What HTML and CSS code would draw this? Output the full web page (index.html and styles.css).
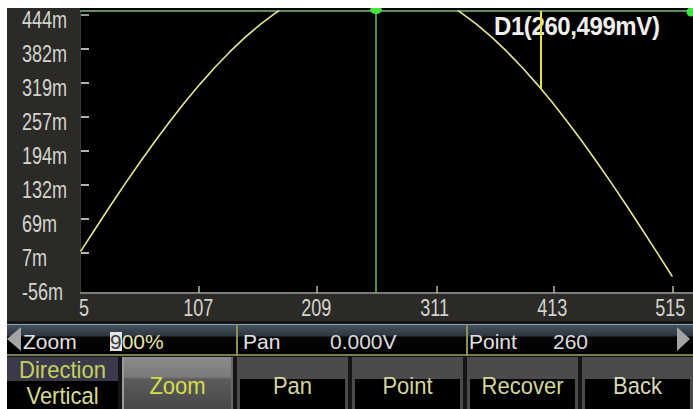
FILE: index.html
```html
<!DOCTYPE html>
<html lang="en">
<head>
<meta charset="utf-8">
<title>Waveform zoom</title>
<link rel="stylesheet" href="styles.css">
</head>
<body>
<div class="scope">
  <section class="chart">
    <ul class="y-scale">
      <li>444m</li>
      <li>382m</li>
      <li>319m</li>
      <li>257m</li>
      <li>194m</li>
      <li>132m</li>
      <li>69m</li>
      <li>7m</li>
      <li>-56m</li>
    </ul>
    <div class="plot">
      <svg class="trace" width="613" height="286" viewBox="0 0 613 286">
        <rect width="613" height="286" fill="#000"/>
        <line x1="0.5" y1="3" x2="0.5" y2="285" stroke="#3a3a36" stroke-width="1"/>
        <!-- top frame -->
        <line x1="0" y1="3" x2="613" y2="3" stroke="#5e8e5e" stroke-width="2"/>
        <!-- bottom axis -->
        <line x1="0" y1="285" x2="613" y2="285" stroke="#7c7c78" stroke-width="2"/>
        <!-- vertical scale ticks -->
        <g stroke="#b4b4b0" stroke-width="2">
          <line x1="1" y1="7" x2="9" y2="7" stroke="#8a9a8a"/>
          <line x1="1" y1="41" x2="9" y2="41"/>
          <line x1="1" y1="75" x2="9" y2="75"/>
          <line x1="1" y1="109" x2="9" y2="109"/>
          <line x1="1" y1="143" x2="9" y2="143"/>
          <line x1="1" y1="177" x2="9" y2="177"/>
          <line x1="1" y1="211" x2="9" y2="211"/>
          <line x1="1" y1="245" x2="9" y2="245"/>
        </g>
        <!-- horizontal scale ticks -->
        <g stroke="#b4b4b0" stroke-width="1.5">
          <line x1="119" y1="278" x2="119" y2="285"/>
          <line x1="237" y1="278" x2="237" y2="285"/>
          <line x1="357" y1="278" x2="357" y2="285"/>
          <line x1="474" y1="278" x2="474" y2="285"/>
          <line x1="593" y1="278" x2="593" y2="285"/>
        </g>
        <!-- waveform -->
        <g fill="none" stroke="#e4e496" stroke-width="1.6" stroke-linejoin="round" stroke-linecap="round">
          <polyline points="1,242.9 15,221.2 30,198.3 45,175.9 60,154.2 75,133.3 90,113.3 105,94.1 120,76.1 135,59.2 150,43.7 165,29.4 180,16.7 195,5.4 198.6,3"/>
          <polyline points="378.4,3 382,5.4 397,16.7 412,29.4 427,43.7 442,59.2 457,76.1 472,94.1 487,113.3 502,133.3 517,154.2 532,175.9 547,198.3 562,221.2 576,242.9 592,268"/>
        </g>
        <!-- sample cursor -->
        <line x1="296" y1="3" x2="296" y2="285" stroke="#66bb66" stroke-width="1.5"/>
        <ellipse cx="296" cy="2" rx="6" ry="4" fill="#3ee63e"/>
        <circle cx="611" cy="4" r="4.5" fill="#3ee63e"/>
        <!-- readout -->
        <text class="readout" x="414" y="27">D1(260,499mV)</text>
        <line x1="461" y1="3" x2="461" y2="81" stroke="#e6e62c" stroke-width="2"/>
      </svg>
    </div>
    <div class="x-scale">
      <span>5</span>
      <span>107</span>
      <span>209</span>
      <span>311</span>
      <span>413</span>
      <span>515</span>
    </div>
  </section>

  <div class="status">
    <div class="field field-zoom">
      <span class="arrow arrow-left"></span>
      <span class="key">Zoom</span>
      <span class="val val-edit"><span class="cursor">9</span>00%</span>
    </div>
    <div class="field field-pan">
      <span class="key">Pan</span>
      <span class="val">0.000V</span>
    </div>
    <div class="field field-point">
      <span class="key">Point</span>
      <span class="val">260</span>
      <span class="arrow arrow-right"></span>
    </div>
  </div>

  <nav class="softkeys">
    <div class="softkey softkey-split"><span class="line-top">Direction</span><span class="line-bottom">Vertical</span></div>
    <div class="softkey is-active"><span>Zoom</span></div>
    <div class="softkey"><span>Pan</span></div>
    <div class="softkey"><span>Point</span></div>
    <div class="softkey"><span>Recover</span></div>
    <div class="softkey softkey-back"><span>Back</span></div>
  </nav>
</div>
</body>
</html>
```

FILE: styles.css
```css
* {
  box-sizing: border-box;
  margin: 0;
  padding: 0;
}

html,
body {
  width: 693px;
  height: 409px;
  overflow: hidden;
  background: #fff;
}

body {
  font-family: "Liberation Sans", Arial, sans-serif;
}

.scope {
  margin: 8px 0 0 7px;
  width: 686px;
  height: 401px;
  background: #151515;
  display: flex;
  flex-direction: column;
}

/* ---------- chart ---------- */

.chart {
  display: grid;
  grid-template-columns: 73px 613px;
  grid-template-rows: 286px 27px;
  background: #2b2a27;
}

/* scale labels use a condensed face: Arial squeezed to narrow width */
.y-scale {
  grid-column: 1;
  grid-row: 1 / 3;
  list-style: none;
  margin-top: -5px;
  padding-left: 15px;
  font-size: 22px;
  line-height: 34px;
  color: #d4d4ce;
}

.y-scale li {
  transform: scale(0.82, 1.1);
  transform-origin: 0 50%;
}

.plot {
  grid-column: 2;
  grid-row: 1;
}

.trace {
  display: block;
}

.readout {
  font-family: "Liberation Sans", Arial, sans-serif;
  font-size: 24px;
  font-weight: bold;
  letter-spacing: -0.4px;
  fill: #f0f0ee;
  transform: scaleY(1.08);
  transform-origin: 0 27px;
  transform-box: view-box;
}

.x-scale {
  grid-column: 2;
  grid-row: 2;
  display: grid;
  grid-template-columns: 59.5px repeat(5, 118px);
  justify-items: center;
  font-size: 22px;
  line-height: 27px;
  color: #d4d4ce;
}

.x-scale span {
  transform: scale(0.82, 1.1);
}

.x-scale span:first-child {
  justify-self: start;
  margin-left: -1px;
  transform-origin: 0 50%;
}

/* ---------- status line ---------- */

.status {
  margin-top: 3px;
  height: 32px;
  display: flex;
  background: linear-gradient(to bottom,
    #8ea3b3 0, #8ea3b3 1px,
    #44515c 1px, #2d363f 12px,
    #050505 13px, #000 30px,
    #7d7d4a 30px, #7d7d4a 32px);
  font-size: 21px;
  color: #e2e2e2;
}

.field {
  display: flex;
  align-items: flex-start;
  padding-top: 5px;
  line-height: 25px;
  white-space: nowrap;
}

.field-zoom {
  width: 229px;
}

.field-pan {
  width: 230px;
  padding-left: 5px;
  border-left: 2px solid #8f8f55;
}

.field-point {
  flex: 1;
  padding-left: 1px;
  border-left: 2px solid #8f8f55;
}

.key {
  width: 87px;
}

.field-point .key {
  width: 84px;
}

.val {
  color: #dcdcdc;
}

.val-edit {
  color: #e6e3aa;
}

.cursor {
  display: inline-block;
  line-height: 19px;
  background: #e4e4e4;
  color: #3a3a3a;
}

.arrow {
  width: 0;
  height: 0;
  margin-top: -2px;
  border-top: 12px solid transparent;
  border-bottom: 12px solid transparent;
}

.arrow-left {
  border-right: 14px solid #a4a4a4;
  margin-right: 2px;
}

.arrow-right {
  margin-left: auto;
  margin-right: 3px;
  border-left: 13px solid #a4a4a4;
}

/* ---------- soft keys ---------- */

.softkeys {
  margin-top: 1px;
  height: 52px;
  display: grid;
  grid-template-columns: repeat(6, 111px);
  column-gap: 4px;
}

.softkey {
  display: flex;
  align-items: center;
  justify-content: center;
  padding-top: 6px;
  background: linear-gradient(to bottom, #4b4b4b 0, #4b4b4b 22px, #000 22px);
  box-shadow: inset 3px 0 0 #4b4b4b, inset -3px 0 0 #4b4b4b;
  font-size: 22px;
  color: #d2d59c;
}

.softkey span {
  transform: scaleY(1.12);
}

.softkey.is-active {
  background: linear-gradient(to bottom, #8c8c8c 0, #7a7a7a 20px, #5c5c5c 22px, #474747 52px);
  box-shadow: inset 2px 0 0 #9a9a9a, inset -2px 0 0 #6a6a6a;
  color: #d6de48;
}

.softkey-back {
  color: #d6d9ba;
}

.softkey-split {
  flex-direction: column;
  justify-content: flex-start;
  padding-top: 0;
  background: linear-gradient(to bottom, #3c3a4a 0, #3c3a4a 24px, #000 24px);
  box-shadow: none;
  line-height: 26px;
}

.line-top {
  color: #c4d25c;
}

.line-bottom {
  color: #d6da96;
}
```
